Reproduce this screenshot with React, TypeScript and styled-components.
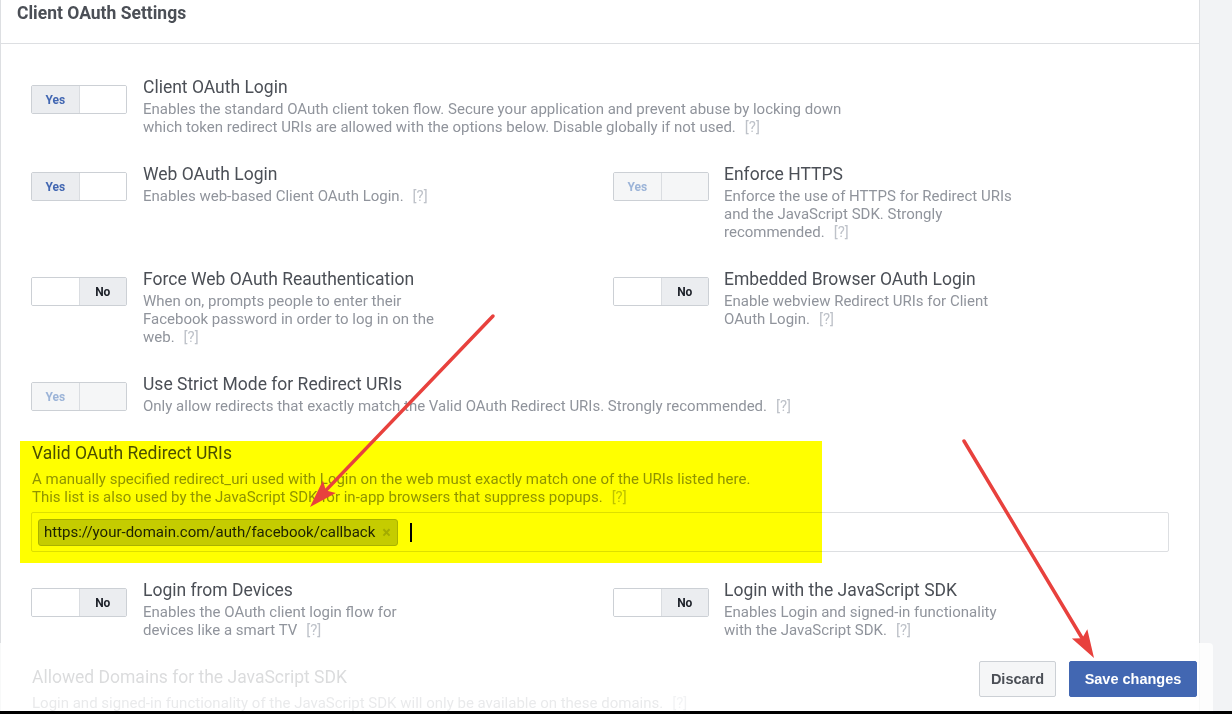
import React from "react";
import styled, { createGlobalStyle } from "styled-components";

interface Setting {
  title: string;
  lines: string[];
  value: "yes" | "no";
  disabled?: boolean;
}

const GlobalStyle = createGlobalStyle`
  html, body {
    margin: 0;
    padding: 0;
    background: #f2f3f5;
    overflow: hidden;
  }
  * {
    box-sizing: border-box;
  }
`;

const Page = styled.div`
  position: relative;
  width: 1232px;
  height: 714px;
  display: flex;
  flex-direction: column;
  font-family: Roboto, "Liberation Sans", sans-serif;
`;

const Viewport = styled.div`
  position: relative;
  flex: 1;
  overflow: hidden;
`;

const BlackBar = styled.div`
  height: 3px;
  background: #000;
`;

const Panel = styled.div`
  width: 1200px;
  background: #fff;
  border-left: 1px solid #dddfe2;
  border-right: 1px solid #dddfe2;
`;

const Header = styled.div`
  height: 44px;
  padding-left: 16px;
  border-bottom: 1px solid #dddfe2;
`;

const HeaderTitle = styled.h2`
  margin: 0;
  font-size: 17.5px;
  line-height: 26px;
  font-weight: 700;
  color: #4b4f56;
`;

const Body = styled.div`
  padding: 33px 30px 60px 30px;
  display: flex;
  flex-direction: column;
  gap: 28px;
`;

const Row = styled.div`
  display: grid;
  grid-template-columns: 582px 1fr;
`;

const Item = styled.div<{ $right?: boolean }>`
  display: flex;
  gap: ${(p) => (p.$right ? 15 : 16)}px;
  align-items: flex-start;
`;

const Switch = styled.div`
  display: flex;
  flex-shrink: 0;
  width: 96px;
  height: 29px;
  margin-top: 8px;
  border: 1px solid #ccd0d5;
  border-radius: 2px;
  overflow: hidden;
`;

const SwitchHalf = styled.span<{ $on: boolean; $yes: boolean; $disabled?: boolean }>`
  flex: 1;
  display: flex;
  align-items: center;
  justify-content: center;
  font-size: 12px;
  font-weight: 700;
  background: ${(p) => (p.$disabled ? "#f5f6f7" : p.$on ? "#ebedf0" : "#fff")};
  color: ${(p) => (p.$yes ? (p.$disabled ? "#9cb4d8" : "#4267b2") : "#1d2129")};
  & + & {
    border-left: 1px solid #dadde1;
  }
`;

const Text = styled.div`
  display: flex;
  flex-direction: column;
`;

const Title = styled.div`
  font-size: 17.5px;
  line-height: 20px;
  color: #4b4f56;
  white-space: nowrap;
`;

const Desc = styled.div<{ $gap?: number }>`
  margin-top: ${(p) => p.$gap ?? 3}px;
  font-size: 15px;
  line-height: 18px;
  color: #90949c;
  white-space: nowrap;
`;

const Help = styled.span`
  margin-left: 9px;
  color: #bec2c9;
`;

const Section = styled.div`
  display: flex;
  flex-direction: column;
  padding-left: 1px;
`;

const TokenInput = styled.div`
  margin-top: 6px;
  margin-left: -1px;
  height: 40px;
  border: 1px solid #dddfe2;
  border-radius: 2px;
  padding: 5px 6px;
  display: flex;
  align-items: center;
`;

const Chip = styled.span`
  height: 27px;
  display: inline-flex;
  align-items: center;
  padding: 0 6px 0 5px;
  border: 1px solid #aab2c8;
  border-radius: 3px;
  background: #c5ccdc;
  font-size: 15px;
  color: #1d2129;
`;

const ChipClose = styled.span`
  margin-left: 7px;
  font-size: 16px;
  font-weight: 700;
  color: #a3abbb;
`;

const Caret = styled.span`
  margin-left: 12px;
  width: 2px;
  height: 19px;
  background: #000;
`;

const Highlight = styled.div`
  position: absolute;
  left: 20px;
  top: 441px;
  width: 802px;
  height: 122px;
  background: #ffff00;
  mix-blend-mode: multiply;
  pointer-events: none;
`;

const SaveBar = styled.div`
  position: absolute;
  left: 0;
  bottom: 0;
  width: 1213px;
  height: 68px;
  background: rgba(255, 255, 255, 0.8);
  border-top-right-radius: 4px;
  display: flex;
  justify-content: flex-end;
  align-items: flex-start;
  gap: 13px;
  padding: 18px 16px 0 0;
`;

const Button = styled.button<{ $primary?: boolean; $width: number }>`
  width: ${(p) => p.$width}px;
  height: 36px;
  padding: 0;
  border-radius: 2px;
  border: 1px solid ${(p) => (p.$primary ? "#4267b2" : "#ccd0d5")};
  background: ${(p) => (p.$primary ? "#4267b2" : "#f5f6f7")};
  color: ${(p) => (p.$primary ? "#fff" : "#4b4f56")};
  font-family: "Liberation Sans", Arial, sans-serif;
  font-size: 14.5px;
  font-weight: 700;
`;

const Overlay = styled.svg`
  position: absolute;
  left: 0;
  top: 0;
  pointer-events: none;
`;

const settingRows: Setting[][] = [
  [
    {
      title: "Client OAuth Login",
      lines: [
        "Enables the standard OAuth client token flow. Secure your application and prevent abuse by locking down",
        "which token redirect URIs are allowed with the options below. Disable globally if not used.",
      ],
      value: "yes",
    },
  ],
  [
    { title: "Web OAuth Login", lines: ["Enables web-based Client OAuth Login."], value: "yes" },
    {
      title: "Enforce HTTPS",
      lines: ["Enforce the use of HTTPS for Redirect URIs", "and the JavaScript SDK. Strongly", "recommended."],
      value: "yes",
      disabled: true,
    },
  ],
  [
    {
      title: "Force Web OAuth Reauthentication",
      lines: ["When on, prompts people to enter their", "Facebook password in order to log in on the", "web."],
      value: "no",
    },
    {
      title: "Embedded Browser OAuth Login",
      lines: ["Enable webview Redirect URIs for Client", "OAuth Login."],
      value: "no",
    },
  ],
  [
    {
      title: "Use Strict Mode for Redirect URIs",
      lines: ["Only allow redirects that exactly match the Valid OAuth Redirect URIs. Strongly recommended."],
      value: "yes",
      disabled: true,
    },
  ],
];

const lowerRow: Setting[] = [
  {
    title: "Login from Devices",
    lines: ["Enables the OAuth client login flow for", "devices like a smart TV"],
    value: "no",
  },
  {
    title: "Login with the JavaScript SDK",
    lines: ["Enables Login and signed-in functionality", "with the JavaScript SDK."],
    value: "no",
  },
];

const Lines = ({ lines, gap }: { lines: string[]; gap?: number }) => (
  <Desc $gap={gap}>
    {lines.map((line, i) => (
      <div key={i}>
        {line}
        {i === lines.length - 1 && <Help>[?]</Help>}
      </div>
    ))}
  </Desc>
);

const SettingItem = ({ s, right }: { s: Setting; right?: boolean }) => (
  <Item $right={right}>
    <Switch>
      <SwitchHalf $on={s.value === "yes"} $yes={s.value === "yes"} $disabled={s.disabled}>
        {s.value === "yes" ? "Yes" : ""}
      </SwitchHalf>
      <SwitchHalf $on={s.value === "no"} $yes={false} $disabled={s.disabled}>
        {s.value === "no" ? "No" : ""}
      </SwitchHalf>
    </Switch>
    <Text>
      <Title>{s.title}</Title>
      <Lines lines={s.lines} />
    </Text>
  </Item>
);

// red annotation arrow, head computed from the line direction
const Arrow = ({ x1, y1, x2, y2 }: { x1: number; y1: number; x2: number; y2: number }) => {
  const dx = x2 - x1;
  const dy = y2 - y1;
  const len = Math.hypot(dx, dy);
  const ux = dx / len;
  const uy = dy / len;
  const bx = x2 - ux * 28;
  const by = y2 - uy * 28;
  const nx = -uy * 9;
  const ny = ux * 9;
  const nock = `${bx + ux * 5},${by + uy * 5}`;
  const head = `${x2},${y2} ${bx + nx},${by + ny} ${nock} ${bx - nx},${by - ny}`;
  return (
    <g>
      <line x1={x1} y1={y1} x2={bx + ux * 5} y2={by + uy * 5} stroke="#e8413d" strokeWidth={3.5} strokeLinecap="round" />
      <polygon points={head} fill="#e8413d" />
    </g>
  );
};

const App = () => {
  return (
    <>
      <GlobalStyle />
      <Page>
        <Viewport>
          <Panel>
            <Header>
              <HeaderTitle>Client OAuth Settings</HeaderTitle>
            </Header>
            <Body>
              {settingRows.map((row, i) => (
                <Row key={i}>
                  {row.map((s, j) => (
                    <SettingItem key={s.title} s={s} right={j === 1} />
                  ))}
                </Row>
              ))}
              <Section>
                <Title>Valid OAuth Redirect URIs</Title>
                <Lines
                  gap={7}
                  lines={[
                    "A manually specified redirect_uri used with Login on the web must exactly match one of the URIs listed here.",
                    "This list is also used by the JavaScript SDK for in-app browsers that suppress popups.",
                  ]}
                />
                <TokenInput>
                  <Chip>
                    https://your-domain.com/auth/facebook/callback
                    <ChipClose>×</ChipClose>
                  </Chip>
                  <Caret />
                </TokenInput>
              </Section>
              <Row>
                {lowerRow.map((s, j) => (
                  <SettingItem key={s.title} s={s} right={j === 1} />
                ))}
              </Row>
              <Section>
                <Title>Allowed Domains for the JavaScript SDK</Title>
                <Lines
                  gap={7}
                  lines={["Login and signed-in functionality of the JavaScript SDK will only be available on these domains."]}
                />
              </Section>
            </Body>
          </Panel>
          <SaveBar>
            <Button $width={77}>Discard</Button>
            <Button $primary $width={128}>
              Save changes
            </Button>
          </SaveBar>
        </Viewport>
        <BlackBar />
        <Highlight />
        <Overlay width={1232} height={714}>
          <Arrow x1={493} y1={316} x2={310} y2={507} />
          <Arrow x1={964} y1={441} x2={1094} y2={658} />
        </Overlay>
      </Page>
    </>
  );
};

export default App;
